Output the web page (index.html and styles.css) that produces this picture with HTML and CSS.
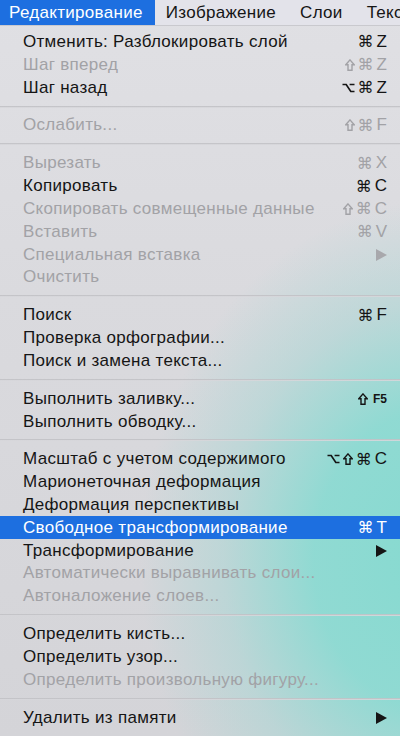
FILE: index.html
```html
<!DOCTYPE html>
<html lang="ru">
<head>
<meta charset="utf-8">
<link rel="stylesheet" href="styles.css">
</head>
<body>
<div class="screen">
  <div class="menubar">
    <span class="mb-item active">Редактирование</span>
    <span class="mb-item">Изображение</span>
    <span class="mb-item">Слои</span>
    <span class="mb-item">Текст</span>
  </div>
  <div class="menu">
    <div class="item"><span class="label">Отменить: Разблокировать слой</span><span class="key"><span class="cmd">⌘</span><span class="ch">Z</span></span></div>
    <div class="item off"><span class="label">Шаг вперед</span><span class="key"><svg class="shift" viewBox="0 0 10 12"><path d="M5 0.9 L9.2 5.7 H7 V11.3 H3 V5.7 H0.8 Z"/></svg><span class="cmd">⌘</span><span class="ch">Z</span></span></div>
    <div class="item"><span class="label">Шаг назад</span><span class="key"><svg class="opt" viewBox="0 0 13 10"><path d="M0.5 1.5 H4.2 L8.8 8.5 H12.5 M7.6 1.5 H12.5"/></svg><span class="cmd">⌘</span><span class="ch">Z</span></span></div>
    <div class="sep"></div>
    <div class="item off"><span class="label">Ослабить...</span><span class="key"><svg class="shift" viewBox="0 0 10 12"><path d="M5 0.9 L9.2 5.7 H7 V11.3 H3 V5.7 H0.8 Z"/></svg><span class="cmd">⌘</span><span class="ch">F</span></span></div>
    <div class="sep"></div>
    <div class="item off"><span class="label">Вырезать</span><span class="key"><span class="cmd">⌘</span><span class="ch">X</span></span></div>
    <div class="item"><span class="label">Копировать</span><span class="key"><span class="cmd">⌘</span><span class="ch">C</span></span></div>
    <div class="item off"><span class="label">Скопировать совмещенные данные</span><span class="key"><svg class="shift" viewBox="0 0 10 12"><path d="M5 0.9 L9.2 5.7 H7 V11.3 H3 V5.7 H0.8 Z"/></svg><span class="cmd">⌘</span><span class="ch">C</span></span></div>
    <div class="item off"><span class="label">Вставить</span><span class="key"><span class="cmd">⌘</span><span class="ch">V</span></span></div>
    <div class="item off"><span class="label">Специальная вставка</span><svg class="arrow" viewBox="0 0 11 12"><path d="M0 0 L11 6 L0 12 Z"/></svg></div>
    <div class="item off"><span class="label">Очистить</span></div>
    <div class="sep"></div>
    <div class="item"><span class="label">Поиск</span><span class="key"><span class="cmd">⌘</span><span class="ch">F</span></span></div>
    <div class="item"><span class="label">Проверка орфографии...</span></div>
    <div class="item"><span class="label">Поиск и замена текста...</span></div>
    <div class="sep"></div>
    <div class="item"><span class="label">Выполнить заливку...</span><span class="key"><svg class="shift" viewBox="0 0 10 12"><path d="M5 0.9 L9.2 5.7 H7 V11.3 H3 V5.7 H0.8 Z"/></svg><span class="fkey">F5</span></span></div>
    <div class="item"><span class="label">Выполнить обводку...</span></div>
    <div class="sep"></div>
    <div class="item"><span class="label">Масштаб с учетом содержимого</span><span class="key"><svg class="opt" viewBox="0 0 13 10"><path d="M0.5 1.5 H4.2 L8.8 8.5 H12.5 M7.6 1.5 H12.5"/></svg><svg class="shift" viewBox="0 0 10 12"><path d="M5 0.9 L9.2 5.7 H7 V11.3 H3 V5.7 H0.8 Z"/></svg><span class="cmd">⌘</span><span class="ch">C</span></span></div>
    <div class="item"><span class="label">Марионеточная деформация</span></div>
    <div class="item"><span class="label">Деформация перспективы</span></div>
    <div class="item sel"><span class="label">Свободное трансформирование</span><span class="key"><span class="cmd">⌘</span><span class="ch">T</span></span></div>
    <div class="item"><span class="label">Трансформирование</span><svg class="arrow" viewBox="0 0 11 12"><path d="M0 0 L11 6 L0 12 Z"/></svg></div>
    <div class="item off"><span class="label">Автоматически выравнивать слои...</span></div>
    <div class="item off"><span class="label">Автоналожение слоев...</span></div>
    <div class="sep"></div>
    <div class="item"><span class="label">Определить кисть...</span></div>
    <div class="item"><span class="label">Определить узор...</span></div>
    <div class="item off"><span class="label">Определить произвольную фигуру...</span></div>
    <div class="sep"></div>
    <div class="item"><span class="label">Удалить из памяти</span><svg class="arrow" viewBox="0 0 11 12"><path d="M0 0 L11 6 L0 12 Z"/></svg></div>
  </div>
</div>
</body>
</html>
```
FILE: styles.css
```css
html, body {
  margin: 0;
  padding: 0;
}
body {
  width: 400px;
  height: 736px;
  overflow: hidden;
  font-family: "Liberation Sans", "DejaVu Sans", sans-serif;
  font-size: 17px;
  letter-spacing: 0.3px;
  color: #151515;
}
.screen {
  width: 400px;
  height: 736px;
  display: flex;
  flex-direction: column;
  background:
    radial-gradient(ellipse 300px 360px at 440px 560px, rgba(134, 218, 208, 1) 0%, rgba(140, 218, 210, 0.95) 42%, rgba(168, 214, 212, 0.55) 72%, rgba(210, 212, 216, 0) 100%),
    linear-gradient(180deg, #e0e0e4 0%, #dadade 40%, #d4d4d8 100%);
}
.menubar {
  height: 25px;
  display: flex;
  align-items: stretch;
  background: #e3e3ea;
  border-bottom: 1px solid #c9c9ce;
  white-space: nowrap;
  overflow: hidden;
}
.mb-item {
  display: flex;
  align-items: center;
  padding: 0 13px 0 11px;
}
.mb-item.active {
  background: #1d6fe0;
  color: #fff;
  padding: 0 12px 0 9px;
}
.menu {
  padding-top: 4.6px;
  display: flex;
  flex-direction: column;
}
.item {
  height: 22.8px;
  display: flex;
  align-items: center;
  justify-content: space-between;
  padding: 0 13px 0 23px;
  white-space: nowrap;
}
.item.off {
  color: #a2a2a6;
}
.item.sel {
  background: #1d6fe0;
  color: #fff;
}
.key {
  display: flex;
  align-items: center;
  gap: 2px;
  letter-spacing: 0;
}
.cmd {
  font-family: "DejaVu Sans", sans-serif;
  font-size: 16px;
}
.ch {
  margin-left: 1px;
}
.shift {
  width: 10px;
  height: 12px;
  margin-right: 1px;
}
.shift path {
  fill: none;
  stroke: currentColor;
  stroke-width: 1.4;
  stroke-linejoin: miter;
}
.opt {
  width: 13px;
  height: 10px;
  margin-right: 1px;
}
.opt path {
  fill: none;
  stroke: currentColor;
  stroke-width: 1.7;
}
.fkey {
  font-weight: bold;
  font-size: 12px;
  margin-left: 2px;
  margin-top: 1px;
}
.arrow {
  width: 11px;
  height: 12px;
  fill: currentColor;
}
.item.off .arrow {
  fill: #a8a8ac;
}
.sep {
  height: 15.1px;
  display: flex;
  align-items: center;
}
.sep::before {
  content: "";
  display: block;
  width: 100%;
  height: 2px;
  background: linear-gradient(180deg, #c2c2c6 0 50%, #d6d6da 50% 100%);
  opacity: 0.9;
}
```
